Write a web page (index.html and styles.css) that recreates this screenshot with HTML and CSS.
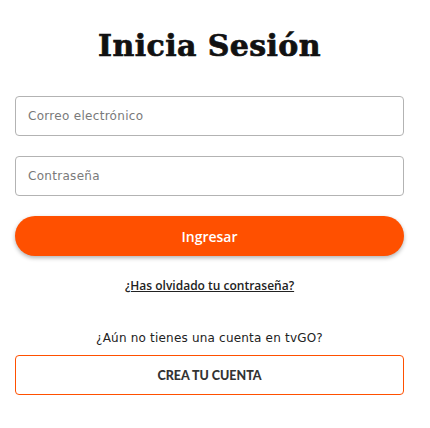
FILE: index.html
```html
<!DOCTYPE html>
<html>
<head>
    <title>Inicia Sesión</title>
    <meta name="viewport" content="width=device-width, initial-scale=1.0">
    <link rel="stylesheet" href="styles.css">
</head>
<body>

<div class="container">
    <h1>Inicia Sesión</h1>
    <form class="login-form" onsubmit="return false">
        <input type="email" placeholder="Correo electrónico">
        <input type="password" placeholder="Contraseña">
        <button class="btn-primary">Ingresar</button>
    </form>
    <a class="forgot-link" href="#">¿Has olvidado tu contraseña?</a>
    <p class="signup-text">¿Aún no tienes una cuenta en tvGO?</p>
    <button class="btn-outline">CREA TU CUENTA</button>
</div>

</body>
</html>
```

FILE: styles.css
```css
body {
    font-family: 'DejaVu Sans', sans-serif;
    background: #fff;
    color: #222;
    margin: 0;
}
.container {
    width: 389px;
    margin-left: 15px;
    padding-top: 28px;
    display: flex;
    flex-direction: column;
}
h1 {
    font-family: 'DejaVu Serif', serif;
    font-weight: bold;
    font-size: 30px;
    line-height: 36px;
    letter-spacing: 0.4px;
    -webkit-text-stroke: 0.7px #111;
    color: #111;
    text-align: center;
    margin: 0 0 32px;
}
.login-form {
    display: flex;
    flex-direction: column;
    gap: 20px;
}
input {
    height: 40px;
    padding: 0 12px;
    border: 1px solid #b3b3b3;
    border-radius: 4px;
    box-sizing: border-box;
    font-family: 'DejaVu Sans', sans-serif;
    font-size: 12px;
    letter-spacing: 0.3px;
    color: #333;
}
input::placeholder {
    color: #7a7a7a;
}
.btn-primary {
    height: 40px;
    border: none;
    border-radius: 20px;
    background-color: #ff5000;
    color: white;
    font-family: 'Open Sans', sans-serif;
    font-weight: 600;
    font-size: 14px;
    box-shadow: 0 2px 4px rgba(0, 0, 0, 0.3);
}
.forgot-link {
    align-self: center;
    margin-top: 22px;
    font-family: 'Open Sans', sans-serif;
    font-size: 12px;
    line-height: 16px;
    font-weight: 600;
    color: #222;
}
.signup-text {
    margin: 36px 0 0;
    font-size: 12px;
    line-height: 16px;
    letter-spacing: 0.2px;
    text-align: center;
    color: #222;
}
.btn-outline {
    height: 40px;
    margin-top: 9px;
    background: white;
    border: 1px solid #ff5000;
    border-radius: 4px;
    font-family: 'Lato', sans-serif;
    font-weight: 900;
    font-size: 12.5px;
    color: #333;
}
```
